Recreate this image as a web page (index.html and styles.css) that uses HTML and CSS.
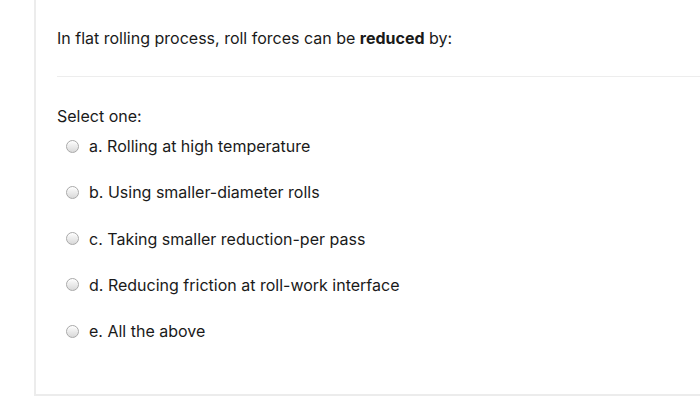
FILE: index.html
```html
<!DOCTYPE html>
<html>
<head>
<meta charset="utf-8">
<link rel="stylesheet" href="styles.css">
</head>
<body>
<div class="card">
  <div class="question">In flat rolling process, roll forces can be <b>reduced</b> by:</div>
  <div class="divider"></div>
  <div class="prompt">Select one:</div>
  <div class="options">
    <div class="option"><span class="radio"></span><span class="label">a. Rolling at high temperature</span></div>
    <div class="option"><span class="radio"></span><span class="label">b. Using smaller-diameter rolls</span></div>
    <div class="option"><span class="radio"></span><span class="label">c. Taking smaller reduction-per pass</span></div>
    <div class="option"><span class="radio"></span><span class="label">d. Reducing friction at roll-work interface</span></div>
    <div class="option"><span class="radio"></span><span class="label">e. All the above</span></div>
  </div>
</div>
</body>
</html>
```

FILE: styles.css
```css
html, body {
  margin: 0;
  padding: 0;
  background: #fff;
}
body {
  font-family: Inter, "Liberation Sans", Arial, sans-serif;
  font-size: 16px;
  line-height: 20px;
  color: #1a1a1a;
}
.card {
  margin-left: 34px;
  height: 396px;
  box-sizing: border-box;
  border-left: 2px solid #ececec;
  border-bottom: 2px solid #ececec;
  padding-left: 21px;
  padding-top: 28px;
}
.question b {
  font-weight: 700;
}
.divider {
  height: 1px;
  background: #ededed;
  margin-top: 28px;
}
.prompt {
  margin-top: 29px;
}
.options {
  display: flex;
  flex-direction: column;
  gap: 26.3px;
  margin-top: 10px;
}
.option {
  display: flex;
  align-items: center;
  height: 20px;
}
.radio {
  width: 11px;
  height: 11px;
  border: 1px solid #a9a9a9;
  border-radius: 50%;
  background: linear-gradient(#fdfdfd, #d9d9d9);
  box-shadow: inset 0 1px 1px rgba(255,255,255,0.8);
  margin-left: 9px;
  margin-right: 10px;
  flex: none;
}
```
